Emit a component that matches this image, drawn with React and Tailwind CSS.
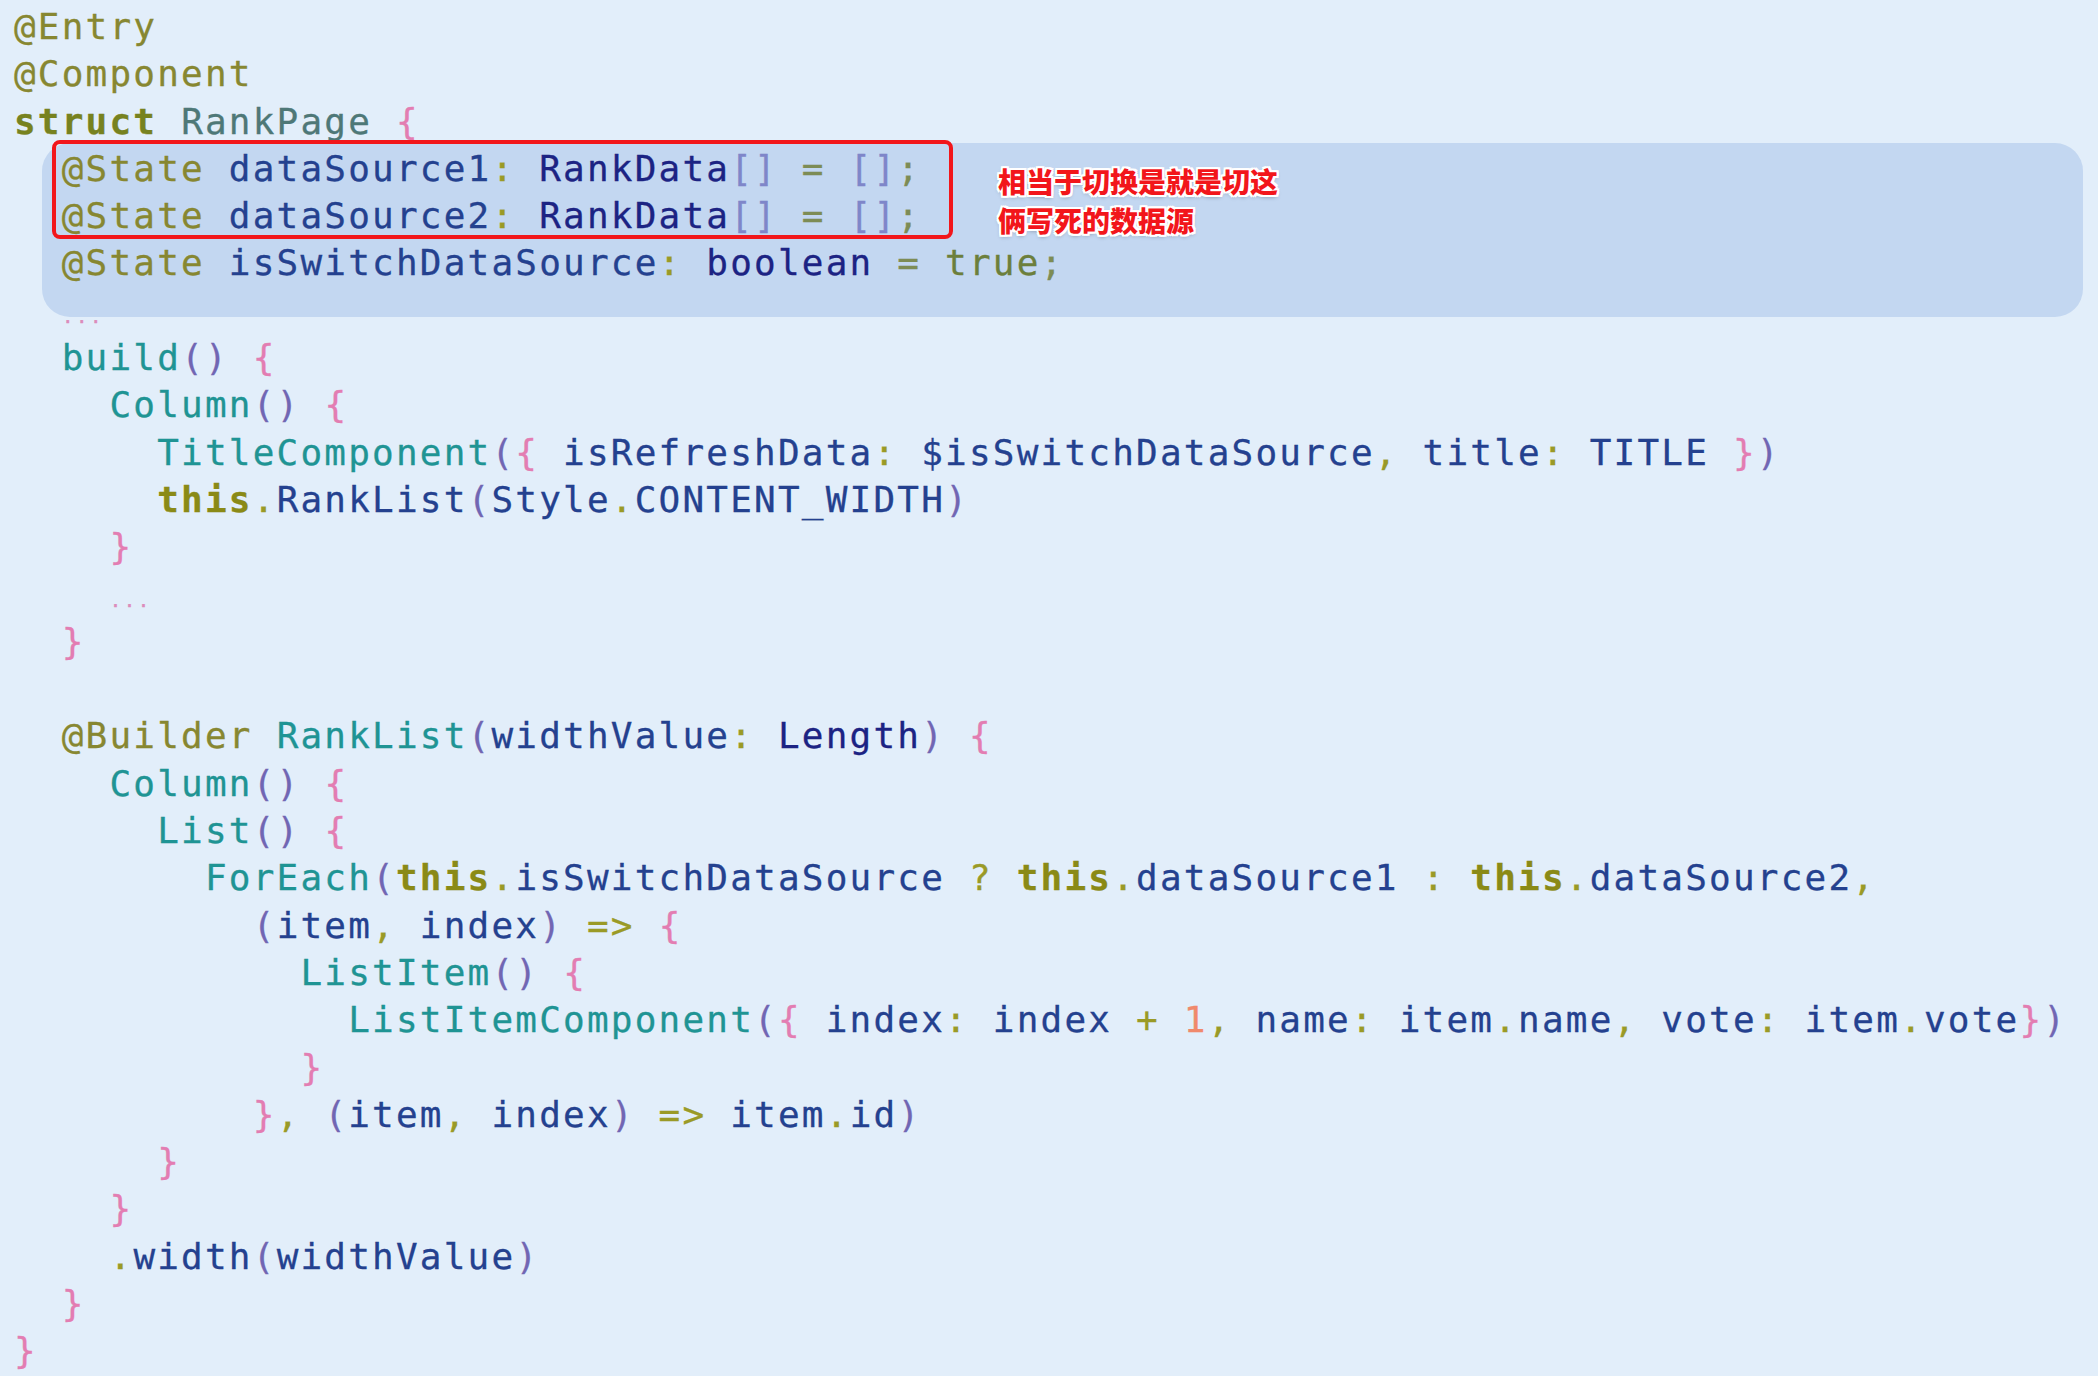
const A = 'text-[#878731]';
const K = 'text-[#77821f] font-bold';
const T = 'text-[#8a8a16] font-bold';
const N = 'text-[#4e7877]';
const I = 'text-[#24418f]';
const Y = 'text-[#1c2383]';
const F = 'text-[#1f9494]';
const B = 'text-[#e37db2]';
const P = 'text-[#7166b3]';
const S = 'text-[#7f86c9]';
const O = 'text-[#9a9a26]';
const E = 'text-[#7d8c55]';
const V = 'text-[#6c7f3c]';
const M = 'text-[#f0896c]';
const D = 'text-[#dc8cbb] text-[20px] tracking-[2px]';

const top = [
  [['@Entry', A]],
  [['@Component', A]],
  [['struct', K], [' '], ['RankPage', N], [' '], ['{', B]],
];

const state = [
  [['@State', A], [' '], ['dataSource1', I], [':', O], [' '], ['RankData', Y], ['[]', S], [' '], ['=', E], [' '], ['[]', S], [';', E]],
  [['@State', A], [' '], ['dataSource2', I], [':', O], [' '], ['RankData', Y], ['[]', S], [' '], ['=', E], [' '], ['[]', S], [';', E]],
  [['@State', A], [' '], ['isSwitchDataSource', I], [':', O], [' '], ['boolean', Y], [' '], ['=', E], [' '], ['true', V], [';', E]],
];

const rest = [
  [['  '], ['...', D]],
  [['  '], ['build', F], ['()', P], [' '], ['{', B]],
  [['    '], ['Column', F], ['()', P], [' '], ['{', B]],
  [['      '], ['TitleComponent', F], ['(', P], ['{', B], [' isRefreshData', I], [':', O], [' $isSwitchDataSource', I], [',', O], [' title', I], [':', O], [' TITLE ', I], ['}', B], [')', P]],
  [['      '], ['this', T], ['.', O], ['RankList', I], ['(', P], ['Style', I], ['.', O], ['CONTENT_WIDTH', I], [')', P]],
  [['    '], ['}', B]],
  [['    '], ['...', D]],
  [['  '], ['}', B]],
  [],
  [['  '], ['@Builder', A], [' '], ['RankList', F], ['(', P], ['widthValue', I], [':', O], [' '], ['Length', Y], [')', P], [' '], ['{', B]],
  [['    '], ['Column', F], ['()', P], [' '], ['{', B]],
  [['      '], ['List', F], ['()', P], [' '], ['{', B]],
  [['        '], ['ForEach', F], ['(', P], ['this', T], ['.', O], ['isSwitchDataSource', I], [' ? ', O], ['this', T], ['.', O], ['dataSource1', I], [' : ', O], ['this', T], ['.', O], ['dataSource2', I], [',', O]],
  [['          '], ['(', P], ['item', I], [',', O], [' index', I], [')', P], [' =>', O], [' '], ['{', B]],
  [['            '], ['ListItem', F], ['()', P], [' '], ['{', B]],
  [['              '], ['ListItemComponent', F], ['(', P], ['{', B], [' index', I], [':', O], [' index ', I], ['+', O], [' '], ['1', M], [',', O], [' name', I], [':', O], [' item', I], ['.', O], ['name', I], [',', O], [' vote', I], [':', O], [' item', I], ['.', O], ['vote', I], ['}', B], [')', P]],
  [['            '], ['}', B]],
  [['          '], ['}', B], [',', O], [' '], ['(', P], ['item', I], [',', O], [' index', I], [')', P], [' =>', O], [' item', I], ['.', O], ['id', I], [')', P]],
  [['      '], ['}', B]],
  [['    '], ['}', B]],
  [['    '], ['.', O], ['width', I], ['(', P], ['widthValue', I], [')', P]],
  [['  '], ['}', B]],
  [['}', B]],
];

function Line({ tokens }) {
  return (
    <div className="h-[47.3px] whitespace-pre">
      {tokens.map(([s, c], i) => (
        <span key={i} className={c}>
          {s}
        </span>
      ))}
    </div>
  );
}

export default function App() {
  return (
    <div className="relative min-h-screen w-full overflow-hidden bg-[#e2eefa]">
      <div className="pl-[14px] pt-[3px] font-['DejaVu_Sans_Mono',monospace] text-[36px] leading-[47.3px] tracking-[2.2px] [-webkit-text-stroke:0.3px_currentcolor]">
        {top.map((t, i) => (
          <Line key={i} tokens={t} />
        ))}
        <div className="-mt-[2px] -mb-[30px] ml-[28px] mr-[15px] rounded-[28px] bg-[#c3d7f1] pt-[2px] pb-[30px] pl-[19.7px]">
          {state.map((t, i) => (
            <Line key={i} tokens={t} />
          ))}
        </div>
        {rest.map((t, i) => (
          <Line key={i} tokens={t} />
        ))}
      </div>

      <div className="absolute left-[52px] top-[140px] h-[99px] w-[901px] rounded-[8px] border-[4px] border-[#f2161b]" />

      <div className="absolute left-[998px] top-[162px] font-['Noto_Sans_CJK_SC',sans-serif] text-[28px] font-black leading-[39px] text-[#f2161b] [text-shadow:2px_0_0_#fff,-2px_0_0_#fff,0_2px_0_#fff,0_-2px_0_#fff,2px_2px_0_#fff,-2px_-2px_0_#fff,2px_-2px_0_#fff,-2px_2px_0_#fff,0_2px_4px_rgba(0,0,0,0.35)]">
        <div>相当于切换是就是切这</div>
        <div>俩写死的数据源</div>
      </div>
    </div>
  );
}
